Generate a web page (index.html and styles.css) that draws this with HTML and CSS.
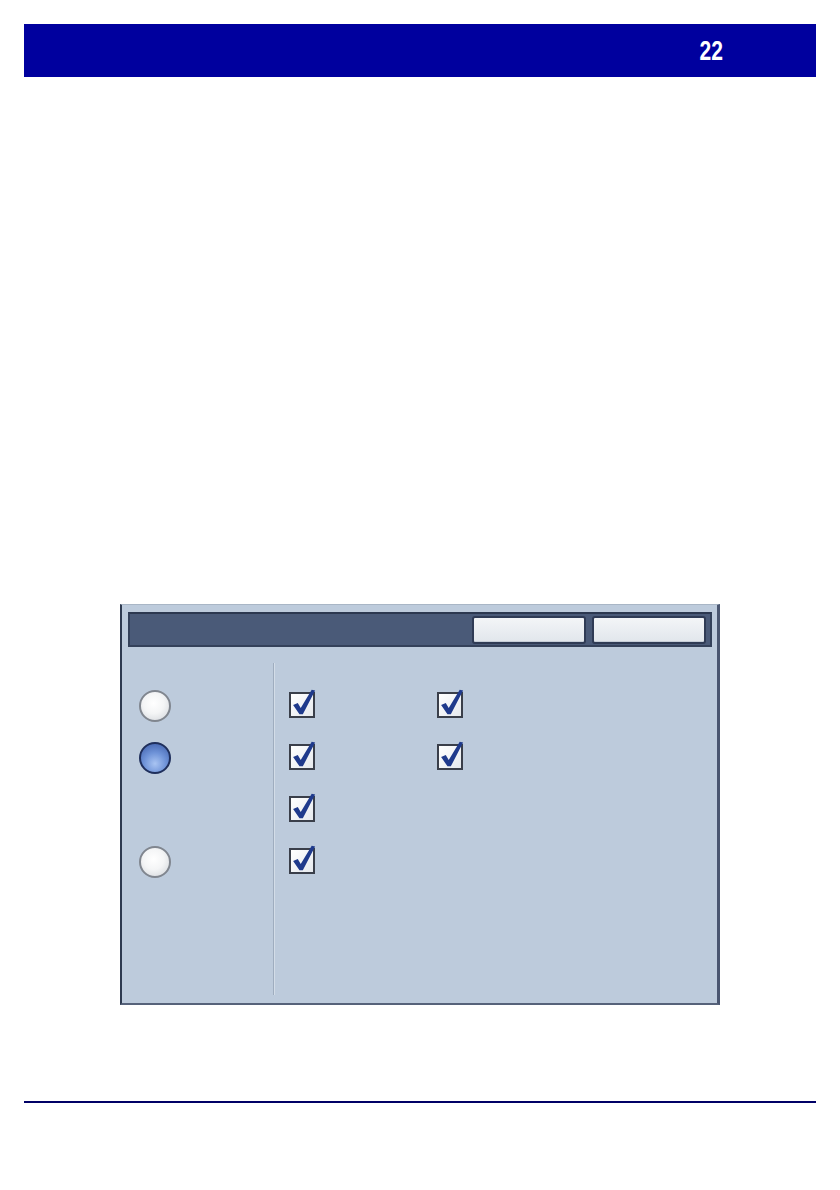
FILE: index.html
```html
<!DOCTYPE html>
<html>
<head>
<meta charset="utf-8">
<link rel="stylesheet" href="styles.css">
</head>
<body>
<div class="header"><span class="pagenum">22</span></div>

<div class="panel">
  <div class="titlebar">
    <div class="btn"></div>
    <div class="btn"></div>
  </div>
  <div class="panel-body">
    <div class="left-col">
      <div class="radio"></div>
      <div class="radio selected"></div>
      <div class="radio-spacer"></div>
      <div class="radio"></div>
    </div>
    <div class="right-col">
      <div class="check-grid">
        <div class="cb"><svg viewBox="0 0 26 26" class="tick"><path d="M2.5 13 L8 10.5 L11.5 16.5 L24.5 -5 L28.5 -4 L14 24 L10 24 Z"/></svg></div>
        <div class="cb"><svg viewBox="0 0 26 26" class="tick"><path d="M2.5 13 L8 10.5 L11.5 16.5 L24.5 -5 L28.5 -4 L14 24 L10 24 Z"/></svg></div>
        <div class="cb"><svg viewBox="0 0 26 26" class="tick"><path d="M2.5 13 L8 10.5 L11.5 16.5 L24.5 -5 L28.5 -4 L14 24 L10 24 Z"/></svg></div>
        <div class="cb"><svg viewBox="0 0 26 26" class="tick"><path d="M2.5 13 L8 10.5 L11.5 16.5 L24.5 -5 L28.5 -4 L14 24 L10 24 Z"/></svg></div>
        <div class="cb"><svg viewBox="0 0 26 26" class="tick"><path d="M2.5 13 L8 10.5 L11.5 16.5 L24.5 -5 L28.5 -4 L14 24 L10 24 Z"/></svg></div>
        <div class="empty"></div>
        <div class="cb"><svg viewBox="0 0 26 26" class="tick"><path d="M2.5 13 L8 10.5 L11.5 16.5 L24.5 -5 L28.5 -4 L14 24 L10 24 Z"/></svg></div>
      </div>
    </div>
  </div>
</div>

<div class="footer-line"></div>
</body>
</html>
```

FILE: styles.css
```css
html, body {
  margin: 0;
  padding: 0;
  background: #ffffff;
}
body {
  font-family: "Liberation Sans", Arial, sans-serif;
  width: 840px;
  height: 1190px;
  overflow: hidden;
}
.header {
  margin: 24px 24px 0 24px;
  height: 53px;
  background: #00009e;
  display: flex;
  align-items: center;
  justify-content: flex-end;
  padding-right: 93px;
}
.pagenum {
  font-family: "Liberation Sans Narrow", "Liberation Sans", sans-serif;
  font-weight: bold;
  font-size: 27px;
  color: #ffffff;
  transform: scaleX(0.78);
  transform-origin: right center;
  margin-top: 1px;
}
.panel {
  margin: 527px 0 0 120px;
  width: 595px;
  height: 398px;
  background: #bdcbdc;
  border-top: 1px solid #a9b6c6;
  border-left: 2px solid #2e3a50;
  border-right: 3px solid #4a5670;
  border-bottom: 2px solid #56627a;
  display: flex;
  flex-direction: column;
}
.titlebar {
  margin: 7px 5px 0 6px;
  height: 31px;
  background: #4a5a78;
  border: 2px solid #34415a;
  border-top-color: #2c3850;
  display: flex;
  align-items: center;
  justify-content: flex-end;
  gap: 6px;
  padding-right: 4px;
}
.btn {
  width: 110px;
  height: 24px;
  background: linear-gradient(#f3f5f7, #e1e6ec);
  border: 2px solid #2f3b55;
  border-radius: 3px;
  box-shadow: inset 0 -1px 0 #c6ced8;
}
.panel-body {
  display: flex;
  flex: 1;
  padding: 16px 0 8px 0;
}
.left-col {
  width: 152px;
  padding: 27px 0 0 17px;
  box-sizing: border-box;
  display: flex;
  flex-direction: column;
  gap: 20px;
  border-right: 1px solid #9fadbf;
  box-shadow: 1px 0 0 #d3dde8;
}
.radio {
  width: 28px;
  height: 28px;
  border-radius: 50%;
  border: 2px solid #80868f;
  background: radial-gradient(circle at 45% 40%, #ffffff 0%, #f4f5f6 45%, #cfd3d8 100%);
}
.radio.selected {
  border-color: #1f2f5c;
  background: radial-gradient(circle at 50% 70%, #a9c4f2 0%, #6f93d8 45%, #3a5aa6 100%);
}
.radio-spacer {
  height: 32px;
}
.right-col {
  flex: 1;
  padding: 29px 0 0 15px;
}
.check-grid {
  display: grid;
  grid-template-columns: 26px 26px;
  column-gap: 122px;
  row-gap: 26px;
}
.cb {
  position: relative;
  width: 22px;
  height: 22px;
  border: 2px solid #3a3f4a;
  background: linear-gradient(135deg, #ffffff, #e6e9ee);
}
.empty {
  width: 26px;
  height: 26px;
}
.tick {
  position: absolute;
  left: 0;
  top: 0;
  width: 22px;
  height: 22px;
  overflow: visible;
}
.tick path {
  fill: #1f3a8c;
}
.footer-line {
  margin: 96px 24px 0 24px;
  height: 2px;
  background: #000066;
}
```
